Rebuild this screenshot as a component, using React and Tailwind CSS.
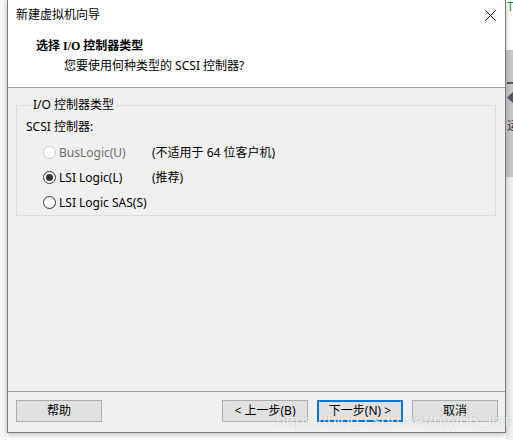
import React from 'react';

const font = { fontFamily: '"Noto Sans", "Noto Sans CJK SC", sans-serif' };

const Radio = ({ checked, disabled }) => (
  <span
    className={`w-[13px] h-[13px] shrink-0 rounded-full border flex items-center justify-center bg-white ${
      disabled ? 'border-[#cccccc]' : 'border-[#333333]'
    }`}
  >
    {checked && <span className="w-[7px] h-[7px] rounded-full bg-[#333333]" />}
  </span>
);

const Btn = ({ children, primary }) => (
  <button
    className={`w-[86px] h-[22px] shrink-0 bg-[#e1e1e1] text-[12px] text-black flex items-center justify-center ${
      primary ? 'border-2 border-[#0078d7]' : 'border border-[#adadad]'
    }`}
  >
    {children}
  </button>
);

const options = [
  { label: 'BusLogic(U)', note: '(不适用于 64 位客户机)', disabled: true },
  { label: 'LSI Logic(L)', note: '(推荐)', checked: true },
  { label: 'LSI Logic SAS(S)' },
];

export default function App() {
  return (
    <div className="w-[513px] h-[440px] bg-white flex overflow-hidden relative" style={font}>
      {/* left edge of desktop */}
      <div className="w-[7px] shrink-0 bg-[#f7f7f7]" />

      {/* dialog */}
      <div className="w-[499px] shrink-0 h-[433px] flex flex-col border-x border-b border-[#7a7a7a] shadow-[0_2px_6px_rgba(0,0,0,0.25)] z-10">
        <div className="h-[88px] bg-white border-b border-[#a0a0a0] flex flex-col">
          <div className="h-[30px] flex items-center justify-between pl-[8px] pr-[9px]">
            <span className="text-[12px] text-black">新建虚拟机向导</span>
            <svg width="11" height="11" viewBox="0 0 11 11" className="mt-[1px]">
              <path d="M0.5 0.5 L10.5 10.5 M10.5 0.5 L0.5 10.5" stroke="#111" strokeWidth="1" />
            </svg>
          </div>
          <div className="pl-[28px] pt-[8px] text-[12px] leading-[16px] font-bold text-black" style={{ fontFamily: '"Liberation Serif", "Noto Sans CJK SC", serif' }}>
            选择 I/O 控制器类型
          </div>
          <div className="pl-[56px] pt-[4px] text-[12px] leading-[16px] text-black">
            您要使用何种类型的 SCSI 控制器?
          </div>
        </div>

        <div className="flex-1 bg-[#f0f0f0] pt-[10px] pl-[8px] pr-[9px]">
          <fieldset className="border border-[#dcdcdc] h-[118px] px-[9px]">
            <legend className="ml-[5px] px-[2px] text-[12px] leading-[14px] text-black">I/O 控制器类型</legend>
            <div className="text-[12px] leading-[16px] text-black mt-[7px]">SCSI 控制器:</div>
            <div className="flex flex-col mt-[5px] pl-[17px]">
              {options.map((o) => (
                <div key={o.label} className="h-[25px] flex items-center text-[12px]">
                  <Radio checked={o.checked} disabled={o.disabled} />
                  <span className={`ml-[3px] w-[93px] ${o.disabled ? 'text-[#6d6d6d]' : 'text-black'}`}>{o.label}</span>
                  {o.note && <span className="text-black">{o.note}</span>}
                </div>
              ))}
            </div>
          </fieldset>
        </div>

        <div className="h-[41px] bg-[#f0f0f0] border-t border-[#a0a0a0] flex items-center pl-[8px] pr-[7px] pb-[2px]">
          <Btn>帮助</Btn>
          <div className="ml-auto flex gap-[9px]">
            <Btn>&lt; 上一步(B)</Btn>
            <Btn primary>下一步(N) &gt;</Btn>
            <Btn>取消</Btn>
          </div>
        </div>
      </div>

      {/* right edge of desktop */}
      <div className="flex-1 flex flex-col">
        <div className="h-[50px] bg-white text-[#1a8a3a] text-[12px] leading-[14px] pl-[1px]">T</div>
        <div className="h-[127px] bg-[#c9c9c9] flex flex-col pl-[1px] pt-[32px]">
          <span className="w-[7px] h-[2px] bg-[#505a64]" />
          <span className="mt-[8px] w-[6px] h-[11px] bg-[#505a64] [clip-path:polygon(100%_0,0_50%,100%_100%)]" />
          <span className="mt-[16px] text-[12px] leading-[14px] text-[#333]">运</span>
        </div>
        <div className="flex-1 bg-[#f0f0f0]" />
      </div>

      {/* watermark */}
      <div
        className="absolute left-[276px] top-[408px] z-20 text-[17px] text-white/75 [text-shadow:0_0_2px_rgba(0,0,0,0.2)]"
        style={{ fontFamily: '"Liberation Sans", sans-serif' }}
      >
        https://blog.csdn.net/pyy66_liang
      </div>
    </div>
  );
}
